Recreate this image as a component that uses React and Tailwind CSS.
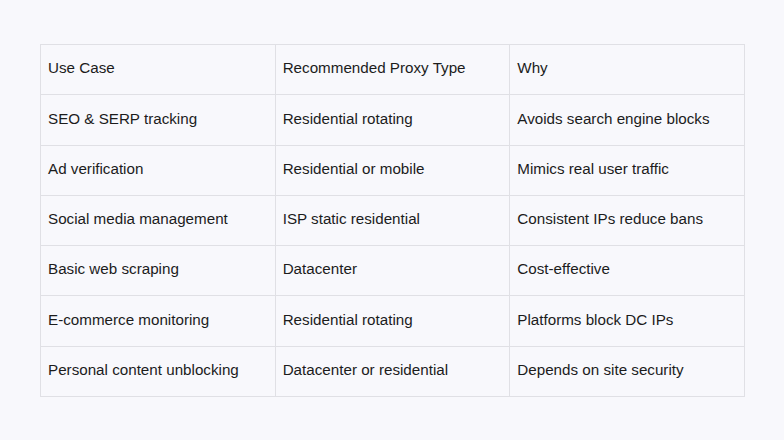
const rows = [
  ["Use Case", "Recommended Proxy Type", "Why"],
  ["SEO & SERP tracking", "Residential rotating", "Avoids search engine blocks"],
  ["Ad verification", "Residential or mobile", "Mimics real user traffic"],
  ["Social media management", "ISP static residential", "Consistent IPs reduce bans"],
  ["Basic web scraping", "Datacenter", "Cost-effective"],
  ["E-commerce monitoring", "Residential rotating", "Platforms block DC IPs"],
  ["Personal content unblocking", "Datacenter or residential", "Depends on site security"],
];

export default function App() {
  return (
    <div className="w-[784px] h-[440px] bg-[#f8f8fc] pt-[44px] pl-[40px]" style={{ fontFamily: '"Liberation Sans", Arial, sans-serif' }}>
      <table className="w-[705px] border-collapse table-fixed text-[15.2px] text-[#1c1c1c]">
        <tbody>
          {rows.map((r, i) => (
            <tr key={i} className="h-[50.3px]">
              {r.map((c, j) => (
                <td key={j} className="border border-[#e0e0e5] pl-[7px] pr-[8px] pt-0 pb-[2px] align-middle">
                  {c}
                </td>
              ))}
            </tr>
          ))}
        </tbody>
      </table>
    </div>
  );
}
